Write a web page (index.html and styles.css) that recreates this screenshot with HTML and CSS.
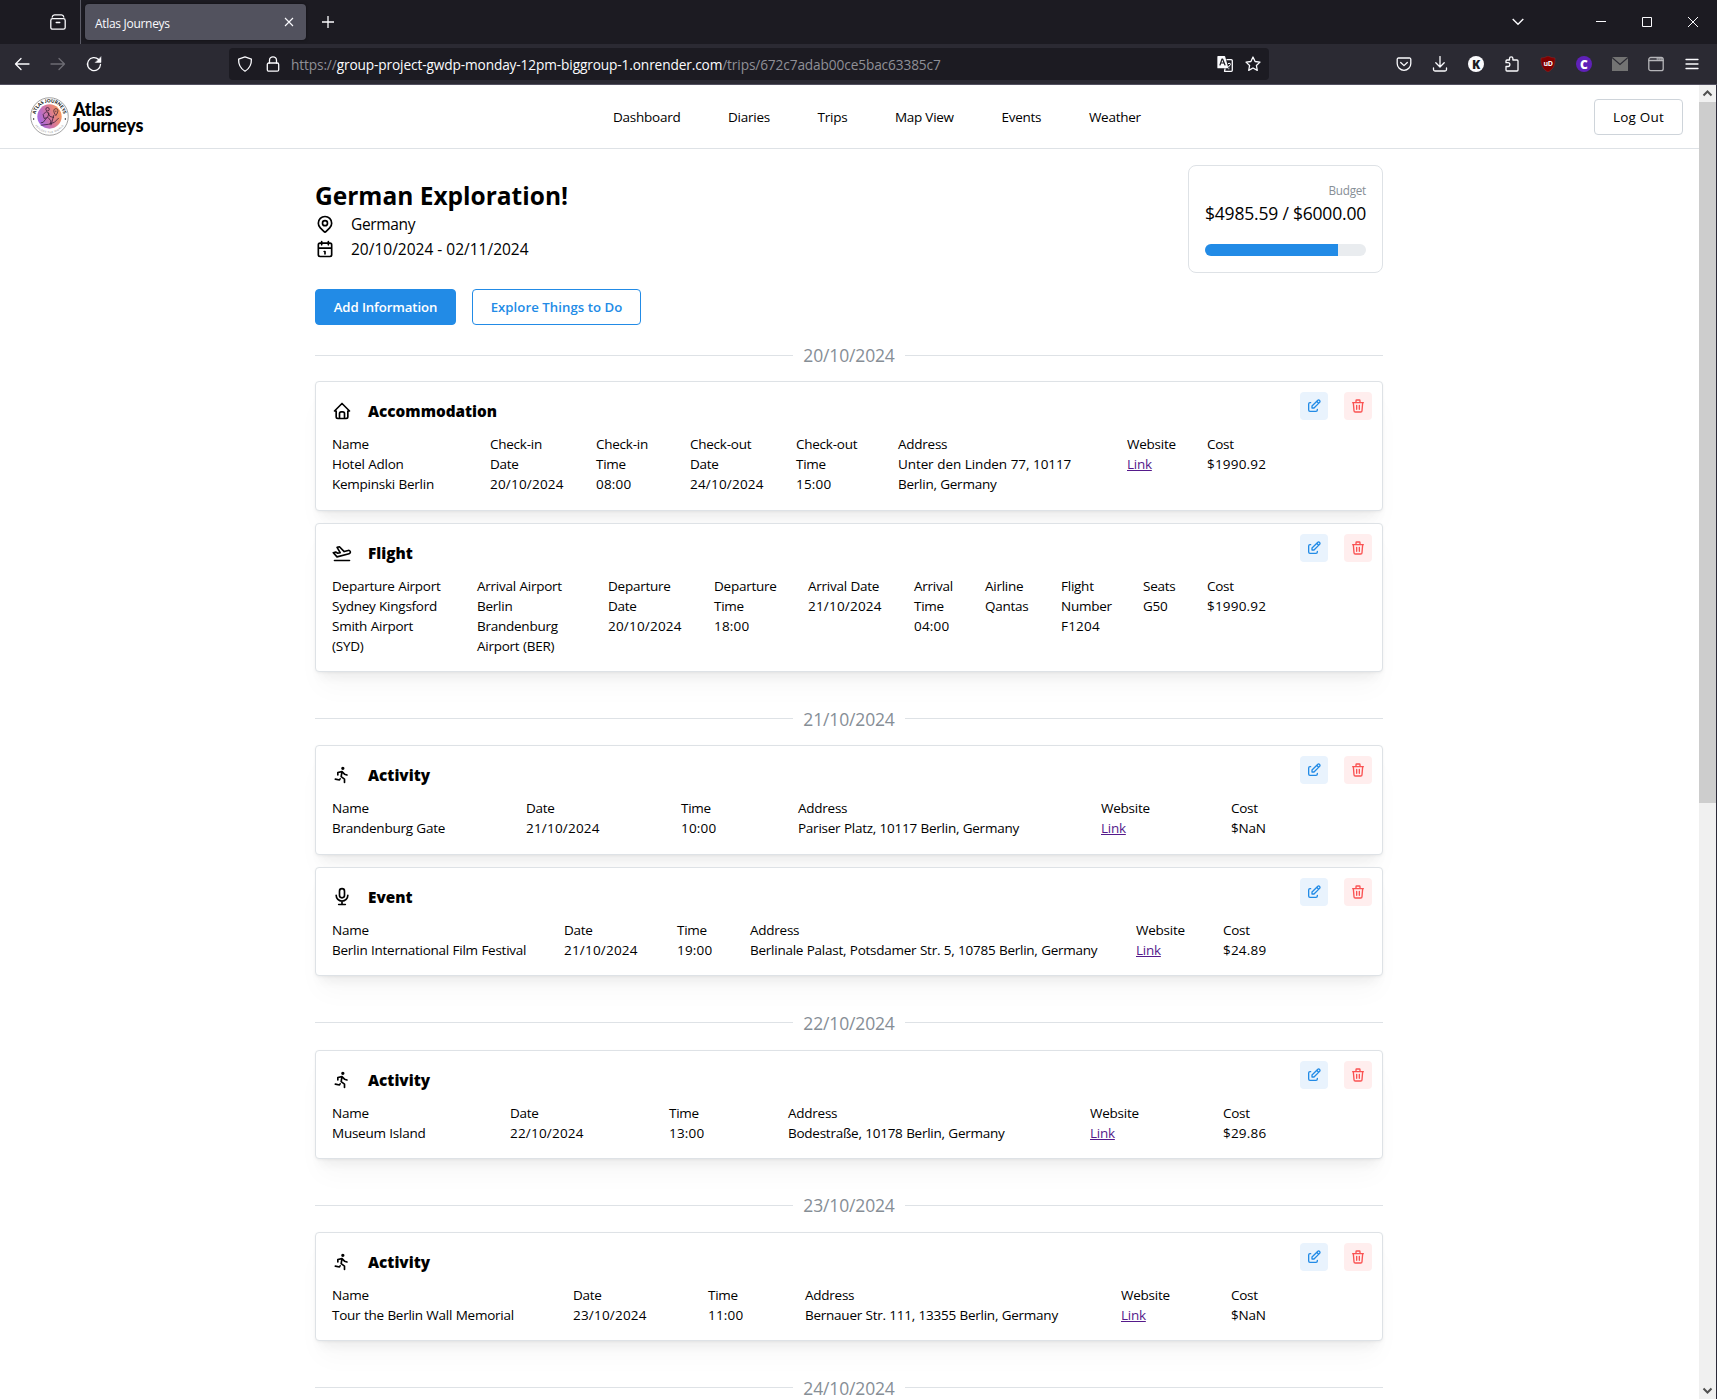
FILE: index.html
```
<!DOCTYPE html>
<html lang="en">
<head>
<meta charset="utf-8">
<title>Atlas Journeys</title>
<link rel="stylesheet" href="styles.css">
</head>
<body>
<svg class="sprite" aria-hidden="true">
  <symbol id="edit" viewBox="0 0 24 24"><path d="M7 7h-1a2 2 0 0 0 -2 2v9a2 2 0 0 0 2 2h9a2 2 0 0 0 2 -2v-1M20.385 6.585a2.1 2.1 0 0 0 -2.97 -2.97l-8.415 8.385v3h3l8.385 -8.415zM16 5l3 3"/></symbol>
  <symbol id="trash" viewBox="0 0 24 24"><path d="M4 7l16 0M10 11l0 6M14 11l0 6M5 7l1 12a2 2 0 0 0 2 2h8a2 2 0 0 0 2 -2l1 -12M9 7v-3a1 1 0 0 1 1 -1h4a1 1 0 0 1 1 1v3"/></symbol>
  <symbol id="home" viewBox="0 0 24 24"><path d="M5 12l-2 0l9 -9l9 9l-2 0M5 12v7a2 2 0 0 0 2 2h10a2 2 0 0 0 2 -2v-7M9 21v-6a2 2 0 0 1 2 -2h2a2 2 0 0 1 2 2v6"/></symbol>
  <symbol id="plane" viewBox="0 0 24 24"><path d="M14.639 10.258l4.83 -1.294a2 2 0 1 1 1.035 3.863l-14.489 3.883l-4.45 -5.02l2.897 -.776l2.45 1.414l2.897 -.776l-3.743 -6.244l2.898 -.777l5.675 5.727zM3 21h18"/></symbol>
  <symbol id="run" viewBox="0 0 24 24"><path d="M13 4m-1 0a1 1 0 1 0 2 0a1 1 0 1 0 -2 0M4 17l5 1l.75 -1.5M15 21l0 -4l-4 -3l1 -6M7 12l0 -3l5 -1l3 3l3 1"/></symbol>
  <symbol id="mic" viewBox="0 0 24 24"><path d="M9 5a3 3 0 0 1 6 0v5a3 3 0 0 1 -6 0zM5 10a7 7 0 0 0 14 0M8 21l8 0M12 17l0 4"/></symbol>
  <symbol id="pin" viewBox="0 0 24 24"><path d="M9 11a3 3 0 1 0 6 0a3 3 0 0 0 -6 0M17.657 16.657l-4.243 4.243a2 2 0 0 1 -2.827 0l-4.244 -4.243a8 8 0 1 1 11.314 0z"/></symbol>
  <symbol id="cal" viewBox="0 0 24 24"><path d="M4 7a2 2 0 0 1 2 -2h12a2 2 0 0 1 2 2v12a2 2 0 0 1 -2 2h-12a2 2 0 0 1 -2 -2zM16 3l0 4M8 3l0 4M4 11l16 0M11 15l1 0M12 15l0 3"/></symbol>
</svg>

<div class="tabbar">
  <div class="tabview"><svg class="ci" viewBox="0 0 16 16"><path d="M2.200 3Q2.600 .8 4.500 .8h7Q13.400 .8 13.800 3"/><rect x=".8" y="4.700" width="14.400" height="10.500" rx="1.800"/><path d="M6.200 8.500h3.600"/></svg></div>
  <div class="tab"><span>Atlas Journeys</span><svg class="cx" viewBox="0 0 10 10"><path d="M1 1l8 8M9 1l-8 8"/></svg></div>
  <svg class="plus" viewBox="0 0 12 12"><path d="M6 0v12M0 6h12"/></svg>
  <div class="winctl">
    <svg class="w-chev" viewBox="0 0 12 8"><path d="M.7 1l5.300 5.300 5.300-5.300"/></svg>
    <svg class="w-btn" viewBox="0 0 10 10"><path d="M0 4.500h10"/></svg>
    <svg class="w-btn" viewBox="0 0 10 10"><path d="M.5.5h9v9h-9z"/></svg>
    <svg class="w-btn" viewBox="0 0 10 10"><path d="M0 0l10 10M10 0l-10 10"/></svg>
  </div>
</div>

<div class="toolbar">
  <div class="navbtns">
    <svg class="ci" viewBox="0 0 16 16"><path d="M15 8H1.500M7 2.500L1.500 8 7 13.500"/></svg>
    <svg class="ci dim" viewBox="0 0 16 16"><path d="M1 8h13.500M9 2.500L14.500 8 9 13.500"/></svg>
    <svg class="ci" viewBox="0 0 16 16"><path d="M12.600 3.500A6.500 6.500 0 1 0 14.500 8.500"/><path class="solid tip" d="M15 1v5.500H9.500z"/></svg>
  </div>
  <div class="urlbar">
    <svg class="ci" viewBox="0 0 16 16"><path d="M8 .9l6.400 2.200c.2 5-1.200 9-6.400 12.100C2.800 12.100 1.400 8.100 1.600 3.100z"/></svg>
    <svg class="ci" viewBox="0 0 16 16"><rect x="2.300" y="7" width="11.400" height="8.200" rx="1.500"/><path d="M4.500 7V4.300a3.500 3.500 0 0 1 7 0V7"/></svg>
    <div class="url">https://<b>group-project-gwdp-monday-12pm-biggroup-1.onrender.com</b>/trips/672c7adab00ce5bac63385c7</div>
    <svg class="ci" viewBox="0 0 16 16"><path class="solid" d="M1 0.700h6.500l3 11H1z"/><path d="M10 3.700h4.300a1 1 0 0 1 1 1v9.600a1 1 0 0 1-1 1H7.500L8 13"/><path class="thin" d="M11.300 7.500q2.500-1 2.200 1-.3 1.200-1.700 1.500v1M11.800 12.600v.3"/><path class="ink" d="M3 9l2-6h.6L8 9M3.800 7h3.400"/></svg>
    <svg class="ci" viewBox="0 0 16 16"><path d="M8 1l2.100 4.500 4.900.6-3.600 3.400.9 4.900L8 12l-4.300 2.400.9-4.900L1 6.100l4.900-.6z"/></svg>
  </div>
  <div class="exts">
    <svg class="ci" viewBox="0 0 16 16"><path d="M2.500 2h11a1.300 1.300 0 0 1 1.300 1.300V7.500a6.800 6.800 0 0 1-13.600 0V3.300A1.300 1.300 0 0 1 2.500 2zM4.700 6.500L8 9.600l3.300-3.100"/></svg>
    <svg class="ci" viewBox="0 0 16 16"><path d="M8 .5v10M3.800 6.800L8 11l4.200-4.200M1.500 12v1.500a1.500 1.500 0 0 0 1.500 1.500h10a1.500 1.500 0 0 0 1.500-1.500V12"/></svg>
    <span class="badge k">K</span>
    <svg class="ci" viewBox="0 0 16 16"><path d="M2 6.500V5a1 1 0 0 1 1-1h2.500V2.500a1.700 1.700 0 0 1 3.400 0V4H13a1 1 0 0 1 1 1v9a1 1 0 0 1-1 1H3a1 1 0 0 1-1-1v-3.500h2a1.900 1.900 0 0 0 0-3.800H2z"/></svg>
    <span class="ub"><svg viewBox="0 0 16 16"><path d="M8 0q3.500 2 7 2c.3 7-1.500 11-7 14C2.500 13 .7 9 1 2q3.500 0 7-2z"/></svg><i>uD</i></span>
    <span class="badge c">C</span>
    <svg class="mail" viewBox="0 0 16 14"><path class="mbg" d="M0 0h16v14H0z"/><path class="mline" d="M0 .5l8 7 8-7"/></svg>
    <svg class="ci grey" viewBox="0 0 16 16"><rect x=".8" y="1.500" width="14.400" height="13.200" rx="2"/><path d="M1 4.500h14M9 2.800h1M11 2.800h1M13 2.800h1"/></svg>
    <svg class="ci" viewBox="0 0 16 16"><path d="M2 3.500h12M2 8h12M2 12.500h12"/></svg>
  </div>
</div>

<div class="viewport">
<div class="page">
  <header class="site">
    <div class="logo">
      <svg viewBox="0 0 80 80">
        <defs>
          <linearGradient id="lg" x1="0" x2="1" y1=".7" y2=".3"><stop offset="0" stop-color="#a168ee"/><stop offset=".5" stop-color="#d3759f"/><stop offset="1" stop-color="#fb9a55"/></linearGradient>
          <path id="arcTop" d="M11.500 43a28.700 28.700 0 1 1 57 0"/>
          <path id="arcBot" d="M5.500 45a35 35 0 0 0 69 0"/>
        </defs>
        <circle class="ring" cx="40" cy="40" r="38.500"/>
        <circle cx="40" cy="40" r="25" fill="url(#lg)"/>
        <text class="arc-a"><textPath href="#arcTop" startOffset="50%">ATLAS JOURNEYS</textPath></text>
        <text class="arc-b"><textPath href="#arcBot" startOffset="50%">EXPLORE THE WORLD</textPath></text>
        <circle cx="7.500" cy="45" r="1.500"/><circle cx="72.500" cy="45" r="1.500"/>
        <circle class="fig" cx="36" cy="25" r="3.500"/>
        <path class="fig" d="M33 30l-6 6 2 8 7-2 3-9zM37 33l4 7 8 2M34 43l-7 9-5 1M37 42l6 7-2 8M49 37l-6 21M22 58l16-2 12-4 9-9M53 38c-6-8-5-14 0-14s6 6 0 14zM53 28v3"/>
      </svg>
      <div class="logotext"><span>Atlas</span><span>Journeys</span></div>
    </div>
    <nav><a>Dashboard</a><a>Diaries</a><a>Trips</a><a>Map View</a><a>Events</a><a>Weather</a></nav>
    <button class="btn logout">Log Out</button>
  </header>

  <main>
    <section class="intro">
      <div class="trip">
        <h1>German Exploration!</h1>
        <div class="meta"><svg class="ti"><use href="#pin"/></svg>Germany</div>
        <div class="meta"><svg class="ti"><use href="#cal"/></svg><span class="dates">20/10/2024 - 02/11/2024</span></div>
      </div>
      <div class="budget">
        <div class="blabel">Budget</div>
        <div class="bval">$4985.59 / $6000.00</div>
        <div class="bar"><div class="fill" style="width:82.700%"></div></div>
      </div>
    </section>
    <div class="buttons"><button class="btn add">Add Information</button><button class="btn explore">Explore Things to Do</button></div>

    <section class="day first">
      <div class="divider">20/10/2024</div>
      <article class="card">
        <div class="head"><div class="title"><svg class="ti"><use href="#home"/></svg>Accommodation</div><div class="acts"><span class="act e"><svg><use href="#edit"/></svg></span><span class="act d"><svg><use href="#trash"/></svg></span></div></div>
        <div class="cols c1">
          <div>Name<br>Hotel Adlon<br>Kempinski Berlin</div>
          <div>Check-in<br>Date<br><span class="n">20/10/2024</span></div>
          <div>Check-in<br>Time<br><span class="n">08:00</span></div>
          <div>Check-out<br>Date<br><span class="n">24/10/2024</span></div>
          <div>Check-out<br>Time<br><span class="n">15:00</span></div>
          <div>Address<br><span class="wide">Unter den Linden 77, 10117</span><br>Berlin, Germany</div>
          <div>Website<br><a class="link">Link</a></div>
          <div>Cost<br><span class="n">$1990.92</span></div>
        </div>
      </article>
      <article class="card">
        <div class="head"><div class="title"><svg class="ti"><use href="#plane"/></svg>Flight</div><div class="acts"><span class="act e"><svg><use href="#edit"/></svg></span><span class="act d"><svg><use href="#trash"/></svg></span></div></div>
        <div class="cols c2">
          <div>Departure Airport<br>Sydney Kingsford<br>Smith Airport<br>(SYD)</div>
          <div>Arrival Airport<br>Berlin<br>Brandenburg<br>Airport (BER)</div>
          <div>Departure<br>Date<br><span class="n">20/10/2024</span></div>
          <div>Departure<br>Time<br><span class="n">18:00</span></div>
          <div>Arrival Date<br><span class="n">21/10/2024</span></div>
          <div>Arrival<br>Time<br><span class="n">04:00</span></div>
          <div>Airline<br>Qantas</div>
          <div>Flight<br>Number<br><span class="n">F1204</span></div>
          <div>Seats<br>G50</div>
          <div>Cost<br><span class="n">$1990.92</span></div>
        </div>
      </article>
    </section>

    <section class="day">
      <div class="divider">21/10/2024</div>
      <article class="card">
        <div class="head"><div class="title"><svg class="ti"><use href="#run"/></svg>Activity</div><div class="acts"><span class="act e"><svg><use href="#edit"/></svg></span><span class="act d"><svg><use href="#trash"/></svg></span></div></div>
        <div class="cols c3">
          <div>Name<br>Brandenburg Gate</div>
          <div>Date<br><span class="n">21/10/2024</span></div>
          <div>Time<br><span class="n">10:00</span></div>
          <div>Address<br>Pariser Platz, 10117 Berlin, Germany</div>
          <div>Website<br><a class="link">Link</a></div>
          <div>Cost<br>$NaN</div>
        </div>
      </article>
      <article class="card">
        <div class="head"><div class="title"><svg class="ti"><use href="#mic"/></svg>Event</div><div class="acts"><span class="act e"><svg><use href="#edit"/></svg></span><span class="act d"><svg><use href="#trash"/></svg></span></div></div>
        <div class="cols c4">
          <div>Name<br>Berlin International Film Festival</div>
          <div>Date<br><span class="n">21/10/2024</span></div>
          <div>Time<br><span class="n">19:00</span></div>
          <div>Address<br>Berlinale Palast, Potsdamer Str. 5, 10785 Berlin, Germany</div>
          <div>Website<br><a class="link">Link</a></div>
          <div>Cost<br><span class="n">$24.89</span></div>
        </div>
      </article>
    </section>

    <section class="day">
      <div class="divider">22/10/2024</div>
      <article class="card">
        <div class="head"><div class="title"><svg class="ti"><use href="#run"/></svg>Activity</div><div class="acts"><span class="act e"><svg><use href="#edit"/></svg></span><span class="act d"><svg><use href="#trash"/></svg></span></div></div>
        <div class="cols c5">
          <div>Name<br>Museum Island</div>
          <div>Date<br><span class="n">22/10/2024</span></div>
          <div>Time<br><span class="n">13:00</span></div>
          <div>Address<br>Bodestraße, 10178 Berlin, Germany</div>
          <div>Website<br><a class="link">Link</a></div>
          <div>Cost<br><span class="n">$29.86</span></div>
        </div>
      </article>
    </section>

    <section class="day">
      <div class="divider">23/10/2024</div>
      <article class="card">
        <div class="head"><div class="title"><svg class="ti"><use href="#run"/></svg>Activity</div><div class="acts"><span class="act e"><svg><use href="#edit"/></svg></span><span class="act d"><svg><use href="#trash"/></svg></span></div></div>
        <div class="cols c6">
          <div>Name<br>Tour the Berlin Wall Memorial</div>
          <div>Date<br><span class="n">23/10/2024</span></div>
          <div>Time<br><span class="n">11:00</span></div>
          <div>Address<br>Bernauer Str. 111, 13355 Berlin, Germany</div>
          <div>Website<br><a class="link">Link</a></div>
          <div>Cost<br>$NaN</div>
        </div>
      </article>
    </section>

    <section class="day"><div class="divider">24/10/2024</div></section>
  </main>
</div>
<div class="scroll">
  <svg viewBox="0 0 17 17"><path d="M4.500 10.500l4-4 4 4"/></svg>
  <div class="thumb"></div>
  <svg viewBox="0 0 17 17"><path d="M4.500 6.500l4 4 4-4"/></svg>
</div>
</div>
</body>
</html>
```
FILE: styles.css
```
* { box-sizing: border-box; }
body {
  margin: 0; height: 1399px; overflow: hidden; display: flex; flex-direction: column;
  font-family: "Open Sans", "Noto Sans", sans-serif; font-size: 13.5px; letter-spacing: -0.25px;
  color: #000; background: #fff;
}
.sprite { display: none; }
svg { fill: none; stroke: currentColor; flex: none; }

/* browser chrome */
.tabbar { height: 44px; flex: none; display: flex; align-items: center; background: #1c1b22; color: #fbfbfe; }
.tabview { width: 81px; height: 44px; border-right: 1px solid #5b5b66; display: flex; align-items: center; padding-left: 50px; }
.ci { width: 16px; height: 16px; stroke-width: 1.3; stroke-linecap: round; stroke-linejoin: round; }
.solid { fill: currentColor; }
.tip { stroke-width: .5; }
.thin { stroke-width: 1; }
.ink { stroke: #1c1b22; stroke-width: 1.2; }
.dim { color: #6d6c74; }
.grey { color: #b5b5b9; }
.tab { margin-left: 4px; width: 221px; height: 36px; border-radius: 4px; background: #52525e; display: flex; align-items: center; justify-content: space-between; padding: 0 12px 0 10px; font-size: 12px; letter-spacing: -0.3px; box-shadow: 0 0 3px rgba(0,0,0,.5); }
.tab span { padding-top: 2px; }
.cx { width: 10px; height: 10px; stroke-width: 1.1; }
.plus { width: 12px; height: 12px; margin-left: 16px; stroke-width: 1.3; }
.winctl { margin-left: auto; display: flex; align-items: center; padding-right: 19px; }
.w-chev { width: 12px; height: 8px; margin-right: 72px; stroke-width: 1.4; }
.w-btn { width: 10px; height: 10px; margin-left: 36px; stroke-width: 1; }
.w-chev + .w-btn { margin-left: 0; }

.toolbar { height: 41px; flex: none; display: flex; align-items: center; background: #2b2a33; color: #fbfbfe; border-bottom: 1px solid #52505f; }
.navbtns { width: 229px; display: flex; gap: 20px; padding-left: 14px; }
.urlbar { width: 1040px; height: 32px; border-radius: 4px; background: #1c1b22; display: flex; align-items: center; padding: 0 8px; gap: 12px; }
.url { flex: 1; font-size: 13.7px; letter-spacing: -0.13px; color: #8f8f96; margin-left: -2px; padding-top: 1px; white-space: nowrap; }
.url b { font-weight: 400; color: #fbfbfe; }
.exts { margin-left: 127px; display: flex; align-items: center; gap: 20px; }
.badge { width: 16px; height: 16px; border-radius: 50%; display: flex; align-items: center; justify-content: center; font-weight: 800; font-size: 12px; letter-spacing: 0; }
.k { background: #fbfbfe; color: #1c1b22; }
.c { background: #5f21b8; color: #fff; }
.ub { width: 16px; height: 16px; display: grid; place-items: center; }
.ub > * { grid-area: 1 / 1; }
.ub svg { width: 16px; height: 16px; fill: #800000; stroke: #8d2a2a; stroke-width: .5; }
.ub i { font-style: normal; font-weight: 700; font-size: 7px; line-height: 8px; letter-spacing: -0.4px; }
.mail { width: 16px; height: 14px; }
.mbg { fill: #737373; stroke: none; }
.mline { stroke: #2b2a33; stroke-width: 1.2; }

/* page frame */
.viewport { flex: 1; min-height: 0; display: flex; border-right: 1px solid #2b2a38; }
.page { flex: 1; overflow: hidden; }
.scroll { width: 17px; background: #f0f0f0; display: flex; flex-direction: column; color: #505050; }
.scroll svg { width: 17px; height: 17px; stroke-width: 2; }
.thumb { height: 701px; background: #cdcdcd; margin-bottom: auto; }

.site { height: 64px; border-bottom: 1px solid #dee2e6; display: flex; align-items: center; padding: 0 16px 0 30px; justify-content: space-between; }
.logo { width: 583px; display: flex; align-items: center; }
.logo svg { width: 39px; height: 39px; fill: #111; stroke: none; }
.logo .ring { fill: #fff; stroke: #777; stroke-width: 1.4; }
.logo .fig { fill: none; stroke: #2a1830; stroke-width: 1.5; }
.arc-a { font: 900 9.5px Lato, sans-serif; text-anchor: middle; letter-spacing: 0.1px; }
.arc-b { font: 400 5px Lato, sans-serif; text-anchor: middle; letter-spacing: 1px; fill: #888; }
.logotext { display: flex; flex-direction: column; font: 900 18px/15.5px Lato, sans-serif; letter-spacing: -0.2px; margin: 2px 0 0 4px; }
nav { display: flex; gap: 47.6px; margin-right: auto; white-space: nowrap; }
.btn { font: 600 13.2px "Open Sans", "Noto Sans", sans-serif; letter-spacing: -0.1px; height: 36px; padding: 0; border-radius: 4px; border: 1px solid #ced4da; background: #fff; color: #000; white-space: nowrap; }
.logout { width: 89px; font-size: 13.5px; font-weight: 500; letter-spacing: 0.2px; }

main { width: 1068px; margin-left: 315px; padding-top: 16px; }
.intro { display: flex; justify-content: space-between; height: 108px; }
.trip { padding-top: 15px; }
h1 { margin: 0; font-size: 24.5px; line-height: 31.5px; letter-spacing: 0; font-weight: 700; }
.meta { height: 25px; display: flex; align-items: center; gap: 16px; font-size: 15.5px; letter-spacing: -0.35px; }
.dates { letter-spacing: 0; }
.ti { width: 20px; height: 20px; stroke-width: 2; stroke-linecap: round; stroke-linejoin: round; }
.budget { width: 195px; border: 1px solid #dee2e6; border-radius: 8px; padding: 15px 16px; text-align: right; white-space: nowrap; }
.blabel { font-size: 11.7px; line-height: 19px; color: #868e96; }
.bval { font-size: 17.500px; line-height: 26px; letter-spacing: -0.2px; }
.bar { margin-top: 18px; height: 12px; border-radius: 6px; background: #e9ecef; overflow: hidden; }
.fill { height: 12px; background: #228be6; }
.buttons { display: flex; gap: 16px; margin-top: 16px; }
.add { width: 141px; background: #228be6; border-color: #228be6; color: #fff; }
.explore { width: 169px; border-color: #228be6; color: #228be6; letter-spacing: 0.05px; }

.day { padding-top: 20.1px; }
.day.first { padding-top: 16.2px; }
.divider { height: 28px; margin-bottom: 12.6px; display: flex; align-items: center; gap: 10px; font-size: 17.500px; letter-spacing: -0.15px; color: #868e96; }
.first .divider { margin-bottom: 12.2px; }
.divider::before, .divider::after { content: ""; flex: 1; height: 1px; background: #dee2e6; }
.card { background: #fff; border: 1px solid #dee2e6; border-radius: 4px; padding: 10px 10px 15.3px 16px; margin-bottom: 12.4px; box-shadow: 0 1px 3px rgba(0,0,0,.05), 0 20px 25px -5px rgba(0,0,0,.03), 0 10px 10px -5px rgba(0,0,0,.05); }
.head { height: 42px; display: flex; justify-content: space-between; align-items: flex-start; }
.title { margin-top: 5.5px; height: 27px; display: flex; align-items: center; gap: 16px; font-size: 15.3px; font-weight: 800; letter-spacing: 0; }
.acts { display: flex; gap: 16px; }
.act { width: 28px; height: 28px; border-radius: 4px; display: flex; align-items: center; justify-content: center; }
.act svg { width: 16px; height: 16px; stroke-width: 2; stroke-linecap: round; stroke-linejoin: round; }
.e { background: #e9f3fd; color: #228be6; }
.d { background: #ffeeee; color: #fa5252; }
.cols { display: grid; line-height: 20px; white-space: nowrap; word-spacing: 0.3px; }
.n { letter-spacing: 0.2px; }
.wide { letter-spacing: -0.1px; }
.link { color: #551a8b; text-decoration: underline; }
.c1 { grid-template-columns: 158px 106px 94px 106px 102px 229px 80px auto; }
.c2 { grid-template-columns: 145px 131px 106px 94px 106px 71px 76px 82px 64px auto; }
.c3 { grid-template-columns: 194px 155px 117px 303px 130px auto; }
.c4 { grid-template-columns: 232px 113px 73px 386px 87px auto; }
.c5 { grid-template-columns: 178px 159px 119px 302px 133px auto; }
.c6 { grid-template-columns: 241px 135px 97px 316px 110px auto; }
```
